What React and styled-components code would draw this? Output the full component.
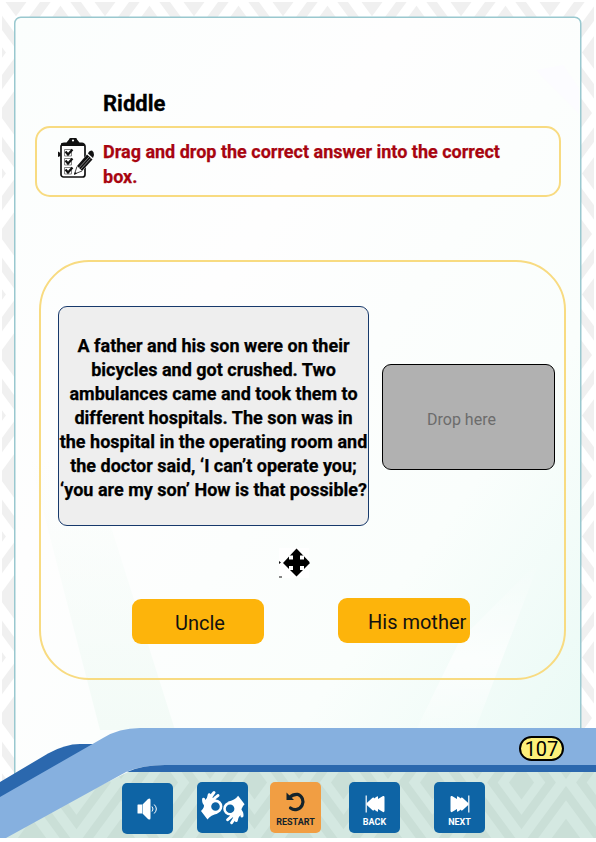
import React from "react";
import styled, { createGlobalStyle } from "styled-components";

const GlobalStyle = createGlobalStyle`
  * { box-sizing: border-box; }
  body { margin: 0; background: #fff; font-family: Roboto, "Liberation Sans", sans-serif; }
`;

const Page = styled.div`
  position: relative;
  width: 596px;
  height: 842px;
  overflow: hidden;
  display: flex;
  flex-direction: column;
  color: #000;
`;

const Backdrop = styled.svg`
  position: absolute;
  inset: 0;
  z-index: -1;
`;

const Title = styled.h1`
  margin: 90px 0 0 103px;
  height: 36px;
  font-size: 22px;
  line-height: 27px;
  font-weight: 700;
  white-space: nowrap;
  -webkit-text-stroke: 0.3px currentColor;
`;

const Instruction = styled.section`
  width: 526px;
  height: 71px;
  margin-left: 35px;
  padding: 10px 0 0 21px;
  display: flex;
  gap: 9px;
  border: 2px solid #f8db81;
  border-radius: 15px;
  flex-shrink: 0;
`;

const InstructionText = styled.p`
  margin: 1px 0 0;
  width: 420px;
  font-size: 18px;
  line-height: 25px;
  font-weight: 700;
  color: #a80510;
  -webkit-text-stroke: 0.25px currentColor;
`;

const Activity = styled.section`
  width: 527px;
  height: 420px;
  margin: 63px 0 0 39px;
  border: 2px solid #f8db81;
  border-radius: 50px;
  flex-shrink: 0;
  display: flex;
  flex-direction: column;
`;

const QuestionRow = styled.div`
  display: flex;
  align-items: center;
  gap: 13px;
  margin: 44px 0 0 17px;
  height: 220px;
`;

const Passage = styled.div`
  width: 311px;
  height: 220px;
  flex-shrink: 0;
  display: flex;
  flex-direction: column;
  align-items: center;
  justify-content: center;
  padding-top: 3px;
  border: 1px solid #17396b;
  border-radius: 9px;
  background: #eee;
`;

const Line = styled.span`
  font-size: 18px;
  line-height: 24px;
  font-weight: 700;
  white-space: nowrap;
  -webkit-text-stroke: 0.25px currentColor;
`;

const DropZone = styled.div`
  width: 173px;
  height: 106px;
  margin-top: 2px;
  flex-shrink: 0;
  padding: 5px 0 0 44px;
  display: flex;
  align-items: center;
  border: 1px solid #000;
  border-radius: 9px;
  background: #b1b1b1;
  color: #6c6c6c;
  font-size: 16px;
`;

const MoveMark = styled.svg`
  display: block;
  margin: 22px 0 0 238px;
`;

const Answers = styled.div`
  display: flex;
  gap: 74px;
  margin: 19px 0 0 91px;
`;

const Answer = styled.button`
  width: 132px;
  height: 45px;
  padding: 2px 0 0 ${(p) => p.$inset}px;
  margin-top: ${(p) => p.$drop || 0}px;
  border: 0;
  border-radius: 9px;
  background: #fdb40b;
  color: #111;
  font: 400 20px Roboto, sans-serif;
  text-align: left;
  white-space: nowrap;
`;

const PageNumber = styled.div`
  width: 45px;
  height: 25px;
  margin: 56px 0 0 519px;
  border: 2px solid #000;
  border-radius: 13px;
  background: #fdf07a;
  font-size: 20px;
  line-height: 22px;
  text-align: center;
  flex-shrink: 0;
`;

const Toolbar = styled.nav`
  display: flex;
  margin: 21px 0 0 122px;
`;

const Tool = styled.button`
  width: 51px;
  height: 51px;
  margin: ${(p) => p.$top || 0}px ${(p) => p.$gap || 0}px 0 0;
  padding: ${(p) => p.$pad || 0}px 0 0;
  border: 0;
  border-radius: 5px;
  display: flex;
  flex-direction: column;
  align-items: center;
  justify-content: center;
  background: ${(p) => (p.$accent ? "#f19e43" : "#0e64a5")};
  color: ${(p) => (p.$accent ? "#14232b" : "#fff")};
  svg { display: block; }
`;

const ToolLabel = styled.span`
  margin-top: 4px;
  font: 700 9px/10px Roboto, sans-serif;
`;

const lines = [
  "A father and his son were on their",
  "bicycles and got crushed. Two",
  "ambulances came and took them to",
  "different hospitals. The son was in",
  "the hospital in the operating room and",
  "the doctor said, ‘I can’t operate you;",
  "‘you are my son’ How is that possible?",
];

const corners = [[0, 0], [89, 0], [0, 121], [89, 121]];

function Weave({ id, color, base, x, y }) {
  return (
    <pattern id={id} width="89" height="121" patternUnits="userSpaceOnUse" x={x} y={y}>
      <rect width="89" height="121" fill={base} />
      <path d="M44.5 43.500 57 60.500 44.500 77.500 32 60.500Z" fill={color} />
      <path d="M44.500 20.900 73.600 60.500 44.500 100.100 15.400 60.500Z" fill="none" stroke={color} strokeWidth="8.500" />
      {corners.map(([cx, cy]) => (
        <g key={`${cx}-${cy}`} transform={`translate(${cx} ${cy})`}>
          <path d="M0-24.200 17.800 0 0 24.200-17.800 0Z" fill={color} />
          <path d="M0-49.900 36.700 0 0 49.900-36.700 0Z" fill="none" stroke={color} strokeWidth="8.500" />
        </g>
      ))}
    </pattern>
  );
}

function Scenery() {
  return (
    <Backdrop width="596" height="842" viewBox="0 0 596 842">
      <defs>
        <Weave id="weave" color="#f0f0f0" base="#fff" x="16" y="-8" />
        <Weave id="weaveGreen" color="#cadfd7" base="#d4e8e1" x="32" y="-4" />
        <linearGradient id="paper" x1="0" y1="0" x2="1" y2="1">
          <stop offset="0" stopColor="#fbfefd" />
          <stop offset=".35" stopColor="#fefefe" />
          <stop offset=".7" stopColor="#fafefc" />
          <stop offset="1" stopColor="#e7f9f4" />
        </linearGradient>
        <linearGradient id="ray" x1="0" y1="0" x2="0" y2="1">
          <stop offset="0" stopColor="#fff" stopOpacity="0" />
          <stop offset=".6" stopColor="#fff" stopOpacity=".7" />
          <stop offset="1" stopColor="#fff" stopOpacity=".2" />
        </linearGradient>
        <linearGradient id="mint" x1="0" y1="0" x2="0" y2="1">
          <stop offset="0" stopColor="#f3fbf7" stopOpacity="0" />
          <stop offset="1" stopColor="#f3fbf7" />
        </linearGradient>
      </defs>
      <rect x="2" y="2" width="592" height="836" fill="url(#weave)" />
      <rect x="14.75" y="17.25" width="566" height="790" rx="6" fill="url(#paper)" stroke="#99c8cf" strokeWidth="1.5" />
      <path d="M30 460H90L175 730H100Z" fill="url(#mint)" />
      <path d="M540 560 475 730H416L460 640Z" fill="url(#ray)" />
      <path d="M536 70 563 65 579 88V114Z" fill="#fcfcff" />
      <path d="M0 842V835L130 771H596V838H0Z" fill="url(#weaveGreen)" />
      <path d="M0 782 48 753.500Q65 744 80 744H115V765L0 815Z" fill="#2b68ae" />
      <path d="M0 797 103 738Q119 728 140 728H596V765H165Q142 765 126 772L6 838H0Z" fill="#86b0df" />
      <path d="M127 772Q142 765 165 765H596V772Z" fill="#2b68ae" />
    </Backdrop>
  );
}

function Checklist() {
  return (
    <svg width="36" height="42" viewBox="0 0 36 42">
      <rect x="3" y="6" width="24" height="33" rx="2.5" fill="#fff" stroke="#111" strokeWidth="1.7" />
      <path d="M3 8V6Q3 4.500 6 4.500H8.500L11 1.500Q11 0 12.500 0H18Q19 0 19 1.500L21.500 4.500H24Q27 4.500 27 8Z" fill="#111" />
      <circle cx="15" cy="2.500" r="1.100" fill="#fff" />
      <path d="M0 13.500 2.500 15V18L0 19Z" fill="#111" />
      <path d="M6.500 11.500H13.500V18H6.500ZM6.500 20.500H13.500V27H6.500ZM6.500 29.500H13.500V36H6.500Z" fill="none" stroke="#777" strokeWidth=".9" />
      <path d="M7.500 13.500 10 16.500 14.500 11.500M7.500 22.500 10 25.500 14.500 20.500M7.500 31.500 10 34.500 14.500 29.500" fill="none" stroke="#111" strokeWidth="2.200" />
      <path d="M16 37 18 28.500 31 14 36 20 24.500 33Z" fill="#fff" />
      <path d="M19 28 29 16.500 34.500 21.500 24 33Z" fill="#111" />
      <path d="M30 15.500Q31 12.500 34 12.500Q36 13.500 36 17L35 20Z" fill="#111" />
      <path d="M20.800 30 31 19M22.500 31.500 32.500 20.500" stroke="#ccc" strokeWidth=".6" />
      <path d="M19 28.500 16.500 36 24 33" fill="#fff" stroke="#111" strokeWidth=".8" />
      <path d="M16 37 17 34 19 35.500Z" fill="#111" />
    </svg>
  );
}

function Hand(props) {
  return (
    <g {...props}>
      <circle cx="15.5" cy="16.500" r="5.600" fill="none" stroke="#fff" strokeWidth="2.600" />
      <path d="M3.500 11.500Q5.500 17 1 21L7.500 29.500Q10.500 25 18 23.500L13 21.500Q9.500 18 11 13L16 10.500 14 8 8 7Z" fill="#fff" />
      <path d="M5.500 14.500Q3.300 13 3.600 9.200M7.500 12 9.300 4.700M10 11Q11 5.500 14 2.500M13 11Q14.500 7.500 18 5.500" fill="none" stroke="#fff" strokeWidth="3" strokeLinecap="round" />
    </g>
  );
}

function Skip({ reverse }) {
  return (
    <svg width="20" height="18" viewBox="0 0 20 18">
      <g transform={reverse ? "translate(20 0) scale(-1 1)" : undefined} fill="#fff">
        <path d="M.5 2Q.7.500 2 1L7 4V2Q7 1 8 1.500L11 3.500V2.800Q11.500 2 12.500 2.800L18.500 8.300V9.700L12.500 15.200Q11.500 16 11 15.200V14.500L8 16.500Q7 17 7 16V14L2 17Q.7 17.500.5 16Z" />
        <path d="M18.200 .5H19.400V17.500H18.200Z" />
      </g>
    </svg>
  );
}

export default function App() {
  return (
    <Page>
      <GlobalStyle />
      <Scenery />
      <Title>Riddle</Title>
      <Instruction>
        <Checklist />
        <InstructionText>
          Drag and drop the correct answer into the correct box.
        </InstructionText>
      </Instruction>
      <Activity>
        <QuestionRow>
          <Passage>
            {lines.map((text) => <Line key={text}>{text}</Line>)}
          </Passage>
          <DropZone>Drop here</DropZone>
        </QuestionRow>
        <MoveMark width="31" height="31" viewBox="0 0 31 31">
          <path d="M0 0H30V30H0Z" fill="#fff" />
          <path d="M17.500 .5 30.500 14V15.500L17.500 28.500 4 15Z" fill="#000" />
          <path d="M10 7.500H14V11.500H10ZM21 7.500H25V11.500H21ZM10 18H14V22H10ZM21 18H25V22H21Z" fill="#fff" />
          <path d="M0 13 2 14.500 0 16ZM0 28.500H3V29.500H0Z" fill="#111" />
        </MoveMark>
        <Answers>
          <Answer $inset={43} $drop={1}>Uncle</Answer>
          <Answer $inset={30}>His mother</Answer>
        </Answers>
      </Activity>
      <PageNumber>107</PageNumber>
      <Toolbar>
        <Tool $gap={24} $top={1} aria-label="Sound">
          <svg width="22" height="24" viewBox="0 0 22 24">
            <path d="M1 7.500H5V16.500H1Q.5 16.500.5 16V8Q.5 7.500 1 7.500ZM5.500 7.500 11 2Q13.500 .5 13.500 3V21Q13.500 23.500 11 22L5.500 16.500Z" fill="#fff" />
            <path d="M15 9.500Q17 12 15 14.500M17.200 7.500Q21.500 12 17.200 16.500" fill="none" stroke="#fff" strokeWidth="1" />
          </svg>
        </Tool>
        <Tool $gap={22} aria-label="Sign language">
          <svg width="46" height="36" viewBox="0 0 46 36">
            <Hand />
            <Hand transform="rotate(180 22.8 17.6)" />
          </svg>
        </Tool>
        <Tool $accent $gap={28} $pad={3}>
          <svg width="22" height="22" viewBox="0 0 22 22">
            <path d="M4.500 6.300Q8 3 12.500 3.300A7.800 7.800 0 1 1 5.500 17" fill="none" stroke="#14232b" strokeWidth="3.200" strokeLinecap="round" />
            <path d="M1.500 1.500V9H9Z" fill="#14232b" />
          </svg>
          <ToolLabel>RESTART</ToolLabel>
        </Tool>
        <Tool $gap={34} $pad={7}>
          <Skip reverse />
          <ToolLabel>BACK</ToolLabel>
        </Tool>
        <Tool $pad={7}>
          <Skip />
          <ToolLabel>NEXT</ToolLabel>
        </Tool>
      </Toolbar>
    </Page>
  );
}
